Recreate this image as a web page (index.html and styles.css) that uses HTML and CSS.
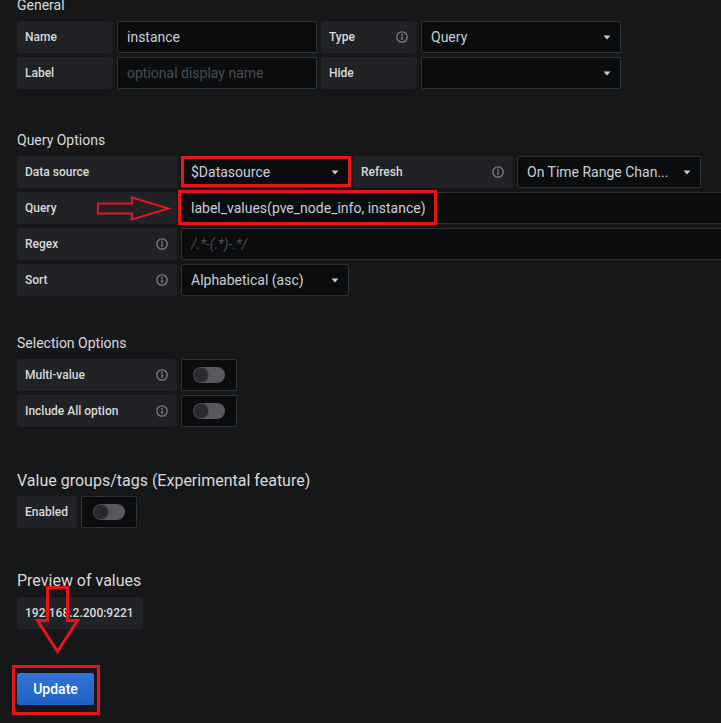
FILE: index.html
```html
<!DOCTYPE html>
<html lang="en">
<head>
    <meta charset="UTF-8">
    <meta name="viewport" content="width=device-width, initial-scale=1.0">
    <link rel="stylesheet" href="styles.css">
    <title>Variable edit</title>
</head>
<body>
    <div class="editor">
        <!-- General -->
        <div class="section section-first">
            <h5 class="section-title">General</h5>
            <div class="form-row">
                <span class="form-label w-96">Name</span>
                <input class="form-input w-200" type="text" value="instance">
                <span class="form-label w-96">Type
                    <svg class="info" viewBox="0 0 12 12" width="12" height="12"><circle cx="6" cy="6" r="5.2" fill="none" stroke="currentColor" stroke-width="1.3"/><circle cx="6" cy="3.7" r="0.9" fill="currentColor"/><rect x="5.3" y="5.2" width="1.4" height="3.8" rx="0.6" fill="currentColor"/></svg>
                </span>
                <div class="form-select w-200">
                    <span>Query</span>
                    <svg class="caret" viewBox="0 0 8 5" width="8" height="5"><path d="M0.6 0.6h6.8L4 4.4z" fill="currentColor"/></svg>
                </div>
            </div>
            <div class="form-row">
                <span class="form-label w-96">Label</span>
                <input class="form-input w-200" type="text" placeholder="optional display name">
                <span class="form-label w-96">Hide</span>
                <div class="form-select w-200">
                    <span></span>
                    <svg class="caret" viewBox="0 0 8 5" width="8" height="5"><path d="M0.6 0.6h6.8L4 4.4z" fill="currentColor"/></svg>
                </div>
            </div>
        </div>

        <!-- Query Options -->
        <div class="section section-query">
            <h5 class="section-title">Query Options</h5>
            <div class="form-row">
                <span class="form-label w-160">Data source</span>
                <div class="form-select w-168">
                    <span>$Datasource</span>
                    <svg class="caret" viewBox="0 0 8 5" width="8" height="5"><path d="M0.6 0.6h6.8L4 4.4z" fill="currentColor"/></svg>
                </div>
                <span class="form-label w-160">Refresh
                    <svg class="info" viewBox="0 0 12 12" width="12" height="12"><circle cx="6" cy="6" r="5.2" fill="none" stroke="currentColor" stroke-width="1.3"/><circle cx="6" cy="3.7" r="0.9" fill="currentColor"/><rect x="5.3" y="5.2" width="1.4" height="3.8" rx="0.6" fill="currentColor"/></svg>
                </span>
                <div class="form-select w-184">
                    <span>On Time Range Chan...</span>
                    <svg class="caret" viewBox="0 0 8 5" width="8" height="5"><path d="M0.6 0.6h6.8L4 4.4z" fill="currentColor"/></svg>
                </div>
            </div>
            <div class="form-row">
                <span class="form-label w-160">Query</span>
                <input class="form-input w-full" type="text" value="label_values(pve_node_info, instance)">
            </div>
            <div class="form-row">
                <span class="form-label w-160">Regex
                    <svg class="info" viewBox="0 0 12 12" width="12" height="12"><circle cx="6" cy="6" r="5.2" fill="none" stroke="currentColor" stroke-width="1.3"/><circle cx="6" cy="3.7" r="0.9" fill="currentColor"/><rect x="5.3" y="5.2" width="1.4" height="3.8" rx="0.6" fill="currentColor"/></svg>
                </span>
                <input class="form-input w-full regex" type="text" placeholder="/.*-(.*)-.*/">
            </div>
            <div class="form-row">
                <span class="form-label w-160">Sort
                    <svg class="info" viewBox="0 0 12 12" width="12" height="12"><circle cx="6" cy="6" r="5.2" fill="none" stroke="currentColor" stroke-width="1.3"/><circle cx="6" cy="3.7" r="0.9" fill="currentColor"/><rect x="5.3" y="5.2" width="1.4" height="3.8" rx="0.6" fill="currentColor"/></svg>
                </span>
                <div class="form-select w-168">
                    <span>Alphabetical (asc)</span>
                    <svg class="caret" viewBox="0 0 8 5" width="8" height="5"><path d="M0.6 0.6h6.8L4 4.4z" fill="currentColor"/></svg>
                </div>
            </div>
        </div>

        <!-- Selection Options -->
        <div class="section section-selection">
            <h5 class="section-title">Selection Options</h5>
            <div class="form-row">
                <span class="form-label w-160">Multi-value
                    <svg class="info" viewBox="0 0 12 12" width="12" height="12"><circle cx="6" cy="6" r="5.2" fill="none" stroke="currentColor" stroke-width="1.3"/><circle cx="6" cy="3.7" r="0.9" fill="currentColor"/><rect x="5.3" y="5.2" width="1.4" height="3.8" rx="0.6" fill="currentColor"/></svg>
                </span>
                <div class="switch"><span class="slider"></span></div>
            </div>
            <div class="form-row">
                <span class="form-label w-160">Include All option
                    <svg class="info" viewBox="0 0 12 12" width="12" height="12"><circle cx="6" cy="6" r="5.2" fill="none" stroke="currentColor" stroke-width="1.3"/><circle cx="6" cy="3.7" r="0.9" fill="currentColor"/><rect x="5.3" y="5.2" width="1.4" height="3.8" rx="0.6" fill="currentColor"/></svg>
                </span>
                <div class="switch"><span class="slider"></span></div>
            </div>
        </div>

        <!-- Value groups -->
        <div class="section section-tags">
            <h5 class="section-title large">Value groups/tags (Experimental feature)</h5>
            <div class="form-row">
                <span class="form-label">Enabled</span>
                <div class="switch"><span class="slider"></span></div>
            </div>
        </div>

        <!-- Preview -->
        <div class="section section-preview">
            <h5 class="section-title large preview-title">Preview of values</h5>
            <div class="form-row">
                <span class="form-label">192.168.2.200:9221</span>
            </div>
        </div>

        <div class="section section-actions">
            <button class="btn-primary">Update</button>
        </div>
    </div>

    <!-- red annotations drawn on top of the screenshot -->
    <svg class="annotations" viewBox="0 0 721 723" width="721" height="723">
        <rect x="182.5" y="157.5" width="167" height="28" />
        <rect x="179.5" y="191.5" width="256" height="32" />
        <rect x="13.5" y="666.5" width="85" height="47" />
        <polygon class="thin" points="98,203.5 132,203.5 132,197.5 168.5,208.5 132,219.5 132,213.5 98,213.5" />
        <polygon points="47.5,587.5 67.5,587.5 67.5,620.5 77.5,620.5 57.5,651.5 37.5,620.5 47.5,620.5" />
    </svg>
</body>
</html>
```

FILE: styles.css
```css
body {
    margin: 0;
    padding: 0;
    background-color: #161719;
    font-family: Roboto, "Liberation Sans", Arial, sans-serif;
    color: #d8d9da;
    overflow: hidden;
    height: 723px;
    position: relative;
}

.editor {
    padding-left: 17px;
    display: flex;
    flex-direction: column;
}

/* Section spacing */
.section-first {
    margin-top: -3px;
}

.section-query {
    margin-top: 43px;
}

.section-selection {
    margin-top: 39px;
}

.section-tags {
    margin-top: 44px;
}

.section-preview {
    margin-top: 43px;
}

.section-actions {
    margin-top: 44px;
}

.section-title {
    margin: 0 0 7px;
    font-size: 14px;
    line-height: 17px;
    font-weight: 400;
    color: #d8d9da;
}

.section-title.large {
    font-size: 16px;
    line-height: 19px;
    margin-bottom: 6px;
}

.section-title.preview-title {
    margin-bottom: 7px;
}

/* Form rows */
.form-row {
    display: flex;
    gap: 4px;
    margin-bottom: 4px;
}

.section .form-row:last-child {
    margin-bottom: 0;
}

.form-label {
    display: flex;
    align-items: center;
    justify-content: space-between;
    box-sizing: border-box;
    height: 32px;
    padding: 0 9px 0 8px;
    background-color: #202226;
    border-radius: 2px;
    font-size: 12px;
    font-weight: 500;
    color: #d8d9da;
    white-space: nowrap;
    flex-shrink: 0;
}

.info {
    color: #7b8087;
}

.form-input,
.form-select {
    box-sizing: border-box;
    height: 32px;
    padding: 0 9px 0 9px;
    background-color: #0b0c0e;
    border: 1px solid #2c3235;
    border-radius: 2px;
    font-family: inherit;
    font-size: 14px;
    color: #c7d0d9;
    flex-shrink: 0;
}

.form-input {
    outline: none;
}

.form-input::placeholder {
    color: #464c54;
}

.form-input.regex::placeholder {
    font-style: italic;
}

.form-select {
    display: flex;
    align-items: center;
    justify-content: space-between;
    padding-right: 9px;
    white-space: nowrap;
}

.caret {
    color: #c7d0d9;
}

.w-96 {
    width: 96px;
}

.w-160 {
    width: 160px;
}

.w-168 {
    width: 168px;
}

.w-184 {
    width: 184px;
}

.w-200 {
    width: 200px;
}

/* full-width inputs run to the window edge */
.w-full {
    flex: 1;
    min-width: 0;
    border-right: none;
    border-radius: 2px 0 0 2px;
}

/* Toggle switch */
.switch {
    box-sizing: border-box;
    width: 56px;
    height: 32px;
    background-color: #0b0c0e;
    border: 1px solid #2c3235;
    border-radius: 2px;
    display: flex;
    align-items: center;
    justify-content: center;
    flex-shrink: 0;
}

.slider {
    position: relative;
    width: 32px;
    height: 16px;
    border-radius: 8px;
    background-color: #58595c;
}

.slider::before {
    content: "";
    position: absolute;
    left: 1px;
    top: 1px;
    width: 14px;
    height: 14px;
    border-radius: 50%;
    background-color: #2a2b2e;
    box-shadow: 0 0 2px rgba(0, 0, 0, 0.6);
}

/* Update button */
.btn-primary {
    width: 77px;
    height: 32px;
    border: none;
    border-radius: 2px;
    background: linear-gradient(#3274d9, #1f60c4);
    color: #ffffff;
    font-family: inherit;
    font-size: 14px;
    font-weight: 500;
    cursor: pointer;
}

.btn-primary:hover {
    background: #3274d9;
}

/* Annotations overlay */
.annotations {
    position: absolute;
    left: 0;
    top: 0;
    pointer-events: none;
}

.annotations rect,
.annotations polygon {
    fill: none;
    stroke: #e8141b;
    stroke-width: 3;
}

.annotations polygon.thin {
    stroke-width: 2;
}
```
